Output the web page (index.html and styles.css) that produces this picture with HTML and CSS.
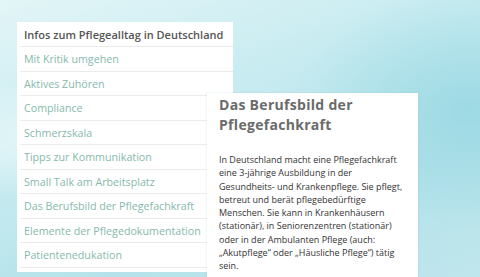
FILE: index.html
```html
<!DOCTYPE html>
<html lang="de">
<head>
  <meta charset="UTF-8" />
  <meta name="viewport" content="width=device-width, initial-scale=1.0"/>
  <title>Infos zum Pflegealltag</title>
  <link rel="stylesheet" href="styles.css">
</head>
<body>
  <div class="scene">
    <ul class="topics">
      <li class="topics-title">Infos zum Pflegealltag in Deutschland</li>
      <li><a href="#">Mit Kritik umgehen</a></li>
      <li><a href="#">Aktives Zuhören</a></li>
      <li><a href="#">Compliance</a></li>
      <li><a href="#">Schmerzskala</a></li>
      <li><a href="#">Tipps zur Kommunikation</a></li>
      <li><a href="#">Small Talk am Arbeitsplatz</a></li>
      <li><a href="#">Das Berufsbild der Pflegefachkraft</a></li>
      <li><a href="#">Elemente der Pflegedokumentation</a></li>
      <li><a href="#">Patientenedukation</a></li>
    </ul>

    <div class="article">
      <h2>Das Berufsbild der Pflegefachkraft</h2>
      <p>In Deutschland macht eine Pflegefachkraft eine 3-jährige Ausbildung in der Gesundheits- und Krankenpflege. Sie pflegt, betreut und berät pflegebedürftige Menschen. Sie kann in Krankenhäusern (stationär), in Seniorenzentren (stationär) oder in der Ambulanten Pflege (auch: „Akutpflege“ oder „Häusliche Pflege“) tätig sein.</p>
    </div>
  </div>
</body>
</html>
```

FILE: styles.css
```css
html, body {
  height: 100%;
}

body {
  margin: 0;
  font-family: "Open Sans", sans-serif;
  overflow: hidden;
  background:
    radial-gradient(ellipse 180px 120px at 470px 110px, rgba(150, 215, 226, 0.8), rgba(150, 215, 226, 0) 100%),
    radial-gradient(ellipse 220px 60px at 60px 140px, rgba(240, 250, 251, 0.7), rgba(240, 250, 251, 0) 100%),
    linear-gradient(160deg, #e3f5f7 0%, #c9ecf1 35%, #b5e2ea 70%, #bfe6ec 100%);
}

.scene {
  display: grid;
  grid-template-columns: 190px 26px 185px;
  grid-template-rows: 71px auto;
  padding: 22px 0 0 17px;
}

.topics {
  grid-column: 1 / 3;
  grid-row: 1 / 3;
  margin: 0;
  padding: 0 0 4px 3px;
  list-style: none;
  background: #fff;
  align-self: start;
}

.topics li {
  height: 24.5px;
  line-height: 24.5px;
  padding-left: 4px;
  border-bottom: 1px solid #ebebeb;
  font-size: 10.7px;
  white-space: nowrap;
  box-sizing: border-box;
}

.topics .topics-title {
  height: 25px;
  line-height: 25px;
  font-size: 11px;
  font-weight: 600;
  color: #555;
}

.topics a {
  color: #86b9ad;
  text-decoration: none;
}

.article {
  grid-column: 2 / 4;
  grid-row: 2;
  position: relative;
  z-index: 1;
  background: #fff;
  padding: 2px 12px 20px;
  box-shadow: 0 0 2px rgba(120, 170, 180, 0.3);
  min-height: 170px;
}

.article h2 {
  margin: 0;
  font-size: 14px;
  line-height: 20px;
  font-weight: 700;
  letter-spacing: 0.3px;
  color: #6b6b6b;
}

.article p {
  margin: 18px 0 0;
  font-size: 9px;
  line-height: 13.3px;
  color: #333;
}
```
